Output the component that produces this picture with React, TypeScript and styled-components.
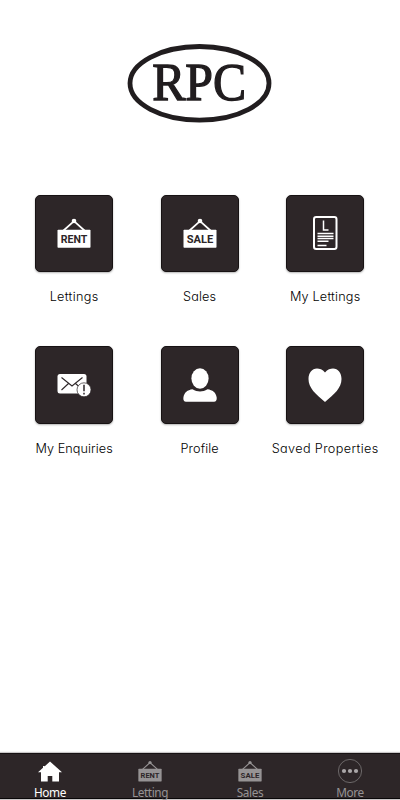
import React from "react";
import styled, { createGlobalStyle } from "styled-components";

const GlobalStyle = createGlobalStyle`
  * { box-sizing: border-box; }
  body { margin: 0; background: #fff; }
`;

const Screen = styled.div`
  display: flex;
  flex-direction: column;
  width: 400px;
  height: 800px;
  overflow: hidden;
  background: #fff;
  padding-bottom: 1px;
`;

const Header = styled.header`
  display: flex;
  justify-content: center;
  height: 194px;
  padding-top: 43px;
`;

const Menu = styled.main`
  flex: 1;
  display: grid;
  grid-template-columns: repeat(3, 125.5px);
  grid-auto-rows: 151.5px;
  padding: 0.5px 0 0 11.4px;
`;

const MenuItem = styled.a`
  display: flex;
  flex-direction: column;
  align-items: center;
`;

const Tile = styled.div`
  display: grid;
  place-items: center;
  width: 78px;
  height: 77.5px;
  border-radius: 5px;
  background: #2d2628;
  border: 1px solid #171213;
  box-shadow: 0 1px 2px rgba(0, 0, 0, 0.3);
`;

const Label = styled.span<{ $spacing: number }>`
  margin-top: 16px;
  font: 300 12.7px/18px Inter, sans-serif;
  font-feature-settings: "cv11";
  letter-spacing: ${(p) => p.$spacing}px;
  color: #000;
  white-space: nowrap;
`;

const TabBar = styled.nav`
  display: grid;
  grid-template-columns: repeat(4, 1fr);
  height: 46px;
  background: #2d2628;
  border-top: 1px solid #171213;
  border-bottom: 1px solid #090708;
  box-shadow: 0 0 1px 1px #c9c7c8;
`;

const Tab = styled.a<{ $active?: boolean }>`
  display: flex;
  flex-direction: column;
  align-items: center;
  padding-top: 5px;
  color: ${(p) => (p.$active ? "#fff" : "#969394")};
`;

const TabLabel = styled.span`
  margin-top: 2px;
  font: 400 11.8px/14px "Noto Sans", sans-serif;
  letter-spacing: -0.4px;
`;

function Logo() {
  return (
    <svg width="146" height="81" viewBox="0 0 146 81">
      <ellipse cx="72.5" cy="40.3" rx="69.5" ry="36.8" fill="none" stroke="#211d1f" strokeWidth="4.8" />
      <text x="25.2" y="56.8" textLength="94" lengthAdjust="spacingAndGlyphs" fontFamily="Liberation Serif, serif" fontSize="52" fill="#211d1f" stroke="#211d1f" strokeWidth="1.3">RPC</text>
    </svg>
  );
}

function SignIcon({ word, size, color = "#fff" }: { word: string; size: number; color?: string }) {
  return (
    <svg width={size} height={size} viewBox="0 0 34 34">
      <path d="M6 15 17 5.2 28 15" fill="none" stroke={color} strokeWidth="1.7" />
      <circle cx="17" cy="5" r="2.3" fill={color} />
      <rect x="0.5" y="13.8" width="33" height="18" rx="0.7" fill={color} />
      <text x="3.7" y="26.6" textLength="26.6" lengthAdjust="spacingAndGlyphs" fontFamily="Roboto, sans-serif" fontWeight="700" fontSize="11" fill="#2d2628">{word}</text>
    </svg>
  );
}

function DocumentIcon() {
  return (
    <svg width="34" height="34" viewBox="0 0 34 34" fill="none" stroke="#fff">
      <rect x="6" y="1" width="22.5" height="32" rx="2.2" strokeWidth="2" />
      <path d="M15.5 4.5V14H20.5" strokeWidth="1.5" />
      <path d="M9.5 17.5H25.5M9.5 20.2H25.5M9.5 22.5H25.5" strokeWidth="1.4" />
      <path d="M9.5 25.2H20.5M9.5 29.5H18.5" strokeWidth="1.4" />
    </svg>
  );
}

function MailIcon() {
  return (
    <svg width="34" height="34" viewBox="0 0 34 34">
      <rect x="0.5" y="6" width="29" height="19.5" rx="2.5" fill="#fff" />
      <path d="m4.5 9.5 10.5 8.5L25.5 9.5M4.5 22l7-6.5M18.5 15.5l4 3.5" fill="none" stroke="#2d2628" strokeWidth="1.1" />
      <circle cx="27" cy="21.8" r="7" fill="#fff" stroke="#2d2628" strokeWidth="0.7" />
      <path d="M27 16.8v6.5M27 24.8v1.8" stroke="#2d2628" strokeWidth="1.5" />
    </svg>
  );
}

function ProfileIcon() {
  return (
    <svg width="34" height="34" viewBox="0 0 34 34" fill="#fff">
      <ellipse cx="17" cy="10.5" rx="8.6" ry="10.2" />
      <path d="M9.5 21.3C12 23 14.5 23.5 17 23.5s5-.5 7.5-2.2C29.5 22 33 24.5 33.7 29.5 34 32 33 33.8 31 33.8H3C1 33.8 0 32 .4 29.5 1.2 24.5 4.5 22 9.5 21.3Z" />
    </svg>
  );
}

function HeartIcon() {
  return (
    <svg width="34" height="34" viewBox="0 0 34 34">
      <path d="M17 4.5C14.5 1.2 11.5.5 9 .5 4 .5.5 5 .5 11c0 9 7 15 16.500 23 9.500-8 16.500-14 16.500-23C33.500 5 30 .5 25 .5c-2.500 0-5.500.7-8 4Z" fill="#fff" />
    </svg>
  );
}

function HomeIcon() {
  return (
    <svg width="24" height="24" viewBox="0 0 24 24" fill="#fff">
      <path d="M12 2.500 24 13.200H21V22.500H14.300V17H9.700V22.500H3V13.200H0L5 8.700V7H6.500V7.400Z" />
    </svg>
  );
}

function MoreIcon() {
  return (
    <svg width="24" height="24" viewBox="0 0 24 24" fill="#aaa7a8">
      <circle cx="12" cy="12" r="11.6" fill="none" stroke="#969394" strokeWidth="0.6" />
      <circle cx="6" cy="12" r="2.1" />
      <circle cx="12" cy="12" r="2.1" />
      <circle cx="18" cy="12" r="2.1" />
    </svg>
  );
}

const items = [
  { label: "Lettings", icon: <SignIcon word="RENT" size={34} />, spacing: 0.32 },
  { label: "Sales", icon: <SignIcon word="SALE" size={34} />, spacing: 0.15 },
  { label: "My Lettings", icon: <DocumentIcon />, spacing: 0.18 },
  { label: "My Enquiries", icon: <MailIcon />, spacing: 0.05 },
  { label: "Profile", icon: <ProfileIcon />, spacing: 0.1 },
  { label: "Saved Properties", icon: <HeartIcon />, spacing: 0.35 },
];

const tabs = [
  { label: "Home", icon: <HomeIcon /> },
  { label: "Letting", icon: <SignIcon word="RENT" size={24} color="#969394" /> },
  { label: "Sales", icon: <SignIcon word="SALE" size={24} color="#969394" /> },
  { label: "More", icon: <MoreIcon /> },
];

export default function App() {
  return (
    <>
      <GlobalStyle />
      <Screen>
        <Header><Logo /></Header>
        <Menu>
          {items.map((item) => (
            <MenuItem key={item.label}>
              <Tile>{item.icon}</Tile>
              <Label $spacing={item.spacing}>{item.label}</Label>
            </MenuItem>
          ))}
        </Menu>
        <TabBar>
          {tabs.map((tab) => (
            <Tab key={tab.label} $active={tab.label === "Home"}>
              {tab.icon}
              <TabLabel>{tab.label}</TabLabel>
            </Tab>
          ))}
        </TabBar>
      </Screen>
    </>
  );
}
